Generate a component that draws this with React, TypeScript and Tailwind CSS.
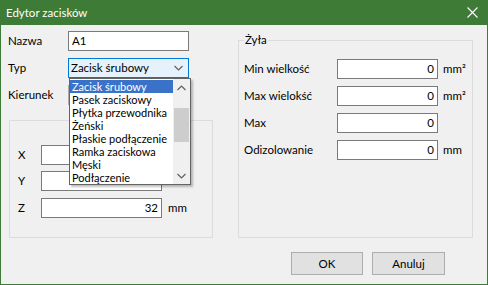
import React from "react";

const font = { fontFamily: "Lato, 'Noto Sans', sans-serif" };

function Input({ w, value = "", align = "right" }: { w: string; value?: string; align?: string }) {
  return (
    <div
      className={`${w} h-[20px] bg-white border border-[#7a7a7a] flex items-center px-[3px] text-black ${
        align === "right" ? "justify-end" : "justify-start"
      }`}
    >
      {value}
    </div>
  );
}

function Chevron({ up = false, className = "" }: { up?: boolean; className?: string }) {
  return (
    <svg width="9" height="6" viewBox="0 0 9 6" className={className}>
      <path
        d={up ? "M0.5 5 L4.5 1 L8.5 5" : "M0.5 1 L4.5 5 L8.5 1"}
        fill="none"
        stroke="#606060"
        strokeWidth="1.2"
      />
    </svg>
  );
}

const items = [
  "Zacisk śrubowy",
  "Pasek zaciskowy",
  "Płytka przewodnika",
  "Żeński",
  "Płaskie podłączenie",
  "Ramka zaciskowa",
  "Męski",
  "Podłączenie",
];

export default function App() {
  return (
    <div
      className="relative w-[488px] h-[285px] bg-[#f0f0f0] border border-[#3e7b37] border-t-0 flex flex-col text-[11.5px] text-black overflow-hidden"
      style={font}
    >
      {/* Title bar */}
      <div className="h-[25px] bg-[#3e7b37] flex items-center pl-[5px] pr-[9px] text-white text-[11.5px]">
        <span className="flex-1">Edytor zacisków</span>
        <svg width="11" height="11" viewBox="0 0 11 11">
          <path d="M0.5 0.5 L10.5 10.5 M10.5 0.5 L0.5 10.5" stroke="white" strokeWidth="1.1" />
        </svg>
      </div>

      {/* Body */}
      <div className="flex">
        {/* Left column */}
        <div className="flex flex-col pl-[7px]">
          <div className="mt-[6px] flex items-center h-[20px]">
            <span className="w-[60px]">Nazwa</span>
            <Input w="w-[121px]" value="A1" align="left" />
          </div>
          <div className="mt-[7px] flex items-center h-[20px]">
            <span className="w-[60px]">Typ</span>
            <div className="w-[121px] h-[20px] bg-[#e5f1fb] border border-[#0078d7] flex items-center pl-[2px] pr-[5px]">
              <span className="flex-1">Zacisk śrubowy</span>
              <Chevron />
            </div>
          </div>
          <div className="mt-[7px] flex items-center h-[20px]">
            <span className="w-[60px]">Kierunek</span>
            <div className="w-[121px] h-[20px] bg-[#e1e1e1] border border-[#adadad]" />
          </div>
          <div className="mt-[15px] ml-[1px] w-[204px] h-[118px] border border-[#dcdcdc] flex flex-col pl-[8px]">
            <div className="mt-[24px] flex items-center h-[20px]">
              <span className="w-[23px]">X</span>
              <Input w="w-[121px]" value="" />
            </div>
            <div className="mt-[6px] flex items-center h-[20px]">
              <span className="w-[23px]">Y</span>
              <Input w="w-[121px]" value="" />
            </div>
            <div className="mt-[7px] flex items-center h-[20px]">
              <span className="w-[23px]">Z</span>
              <Input w="w-[121px]" value="32" />
              <span className="ml-[6px]">mm</span>
            </div>
          </div>
        </div>

        {/* Right column */}
        <div className="ml-[25px] mt-[15px] relative w-[235px] h-[198px] border border-[#dcdcdc] flex flex-col pl-[5px]">
          <span className="absolute left-[5px] -top-[9px] bg-[#f0f0f0] px-[1px] leading-[16px]">Żyła</span>
          {[
            ["Min wielkość", "mm²"],
            ["Max wielokść", "mm²"],
            ["Max", ""],
            ["Odizolowanie", "mm"],
          ].map(([label, unit], i) => (
            <div key={label} className={`${i === 0 ? "mt-[18px]" : "mt-[7px]"} flex items-center h-[20px]`}>
              <span className="w-[93px]">{label}</span>
              <Input w="w-[101px]" value="0" />
              <span className="ml-[5px]">{unit}</span>
            </div>
          ))}
        </div>
      </div>

      {/* Buttons */}
      <div className="mt-[14px] flex pl-[290px]">
        <div className="w-[72px] h-[23px] bg-[#e1e1e1] border border-[#adadad] flex items-center justify-center">
          OK
        </div>
        <div className="ml-[9px] w-[73px] h-[23px] bg-[#e1e1e1] border border-[#adadad] flex items-center justify-center">
          Anuluj
        </div>
      </div>

      {/* Dropdown overlay */}
      <div className="absolute left-[68px] top-[78px] w-[122px] h-[107px] bg-white border border-[#646464] shadow-[2px_2px_2px_rgba(0,0,0,0.25)] flex">
        <div className="flex-1 flex flex-col pt-[1px]">
          {items.map((it, i) => (
            <div
              key={it}
              className={`h-[13px] leading-[13px] text-[11px] pl-[2px] whitespace-nowrap overflow-hidden ${
                i === 0 ? "bg-[#3b72c9] text-white" : "text-black"
              }`}
            >
              {it}
            </div>
          ))}
        </div>
        <div className="w-[17px] bg-[#f0f0f0] flex flex-col items-center">
          <div className="h-[17px] flex items-center justify-center">
            <Chevron up />
          </div>
          <div className="mt-[12px] w-[15px] h-[34px] bg-[#cdcdcd]" />
          <div className="flex-1" />
          <div className="h-[17px] flex items-center justify-center">
            <Chevron />
          </div>
        </div>
      </div>
    </div>
  );
}
